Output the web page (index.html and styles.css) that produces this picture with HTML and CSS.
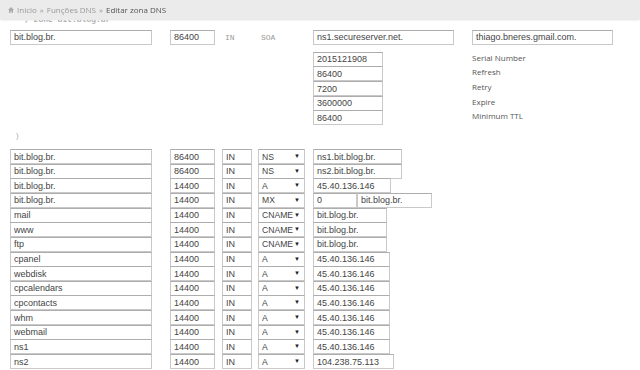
FILE: index.html
```html
<!DOCTYPE html>
<html lang="pt">
<head>
    <meta charset="UTF-8">
    <title>Editar zona DNS</title>
    <link rel="stylesheet" href="styles.css">
</head>
<body>
    <div class="topbar">
        <svg class="home" width="6" height="6" viewBox="0 0 6 6"><path d="M3 0 L6 3 L5 3 L5 6 L3.6 6 L3.6 4.2 L2.4 4.2 L2.4 6 L1 6 L1 3 L0 3 Z" fill="#aaa"/></svg>
        <span>Início</span> <span class="sep">»</span> <span>Funções DNS</span> <span class="sep">»</span> <span class="current">Editar zona DNS</span>
    </div>

    <div class="zone">
        <div class="comment"><span>; zone bit.blog.br</span></div>

        <div class="row soa">
            <input class="name" type="text" value="bit.blog.br.">
            <input class="ttl" type="text" value="86400">
            <span class="mono cls">IN</span>
            <span class="mono type-txt">SOA</span>
            <input class="soa-ns" type="text" value="ns1.secureserver.net.">
            <input class="soa-mail" type="text" value="thiago.bneres.gmail.com.">
        </div>

        <div class="serials">
            <div class="row serial"><input type="text" value="2015121908"><label>Serial Number</label></div>
            <div class="row serial"><input type="text" value="86400"><label>Refresh</label></div>
            <div class="row serial"><input type="text" value="7200"><label>Retry</label></div>
            <div class="row serial"><input type="text" value="3600000"><label>Expire</label></div>
            <div class="row serial"><input type="text" value="86400"><label>Minimum TTL</label></div>
        </div>

        <p class="close">)</p>

        <div id="records" class="records"></div>
    </div>

    <script>
        var records = [
            ['bit.blog.br.', '86400', 'NS', ['ns1.bit.blog.br.'], [89]],
            ['bit.blog.br.', '86400', 'NS', ['ns2.bit.blog.br.'], [89]],
            ['bit.blog.br.', '14400', 'A', ['45.40.136.146'], [78]],
            ['bit.blog.br.', '14400', 'MX', ['0', 'bit.blog.br.'], [44, 75]],
            ['mail', '14400', 'CNAME', ['bit.blog.br.'], [74]],
            ['www', '14400', 'CNAME', ['bit.blog.br.'], [74]],
            ['ftp', '14400', 'CNAME', ['bit.blog.br.'], [74]],
            ['cpanel', '14400', 'A', ['45.40.136.146'], [77]],
            ['webdisk', '14400', 'A', ['45.40.136.146'], [77]],
            ['cpcalendars', '14400', 'A', ['45.40.136.146'], [77]],
            ['cpcontacts', '14400', 'A', ['45.40.136.146'], [77]],
            ['whm', '14400', 'A', ['45.40.136.146'], [77]],
            ['webmail', '14400', 'A', ['45.40.136.146'], [77]],
            ['ns1', '14400', 'A', ['45.40.136.146'], [77]],
            ['ns2', '14400', 'A', ['104.238.75.113'], [81]]
        ];
        var types = ['A', 'AAAA', 'CNAME', 'MX', 'NS', 'TXT'];

        function input(cls, value) {
            var ele = document.createElement('input');
            ele.setAttribute('type', 'text');
            if (cls) ele.classList.add(cls);
            ele.value = value;
            return ele;
        }

        var container = document.getElementById('records');
        for (var i = 0; i < records.length; i++) {
            var r = records[i];
            var row = document.createElement('div');
            row.classList.add('row');
            row.appendChild(input('name', r[0]));
            row.appendChild(input('ttl', r[1]));
            row.appendChild(input('cls', 'IN'));

            var wrap = document.createElement('span');
            wrap.classList.add('type');
            var sel = document.createElement('select');
            for (var t = 0; t < types.length; t++) {
                var opt = document.createElement('option');
                opt.textContent = types[t];
                if (types[t] == r[2]) opt.selected = true;
                sel.appendChild(opt);
            }
            wrap.appendChild(sel);
            row.appendChild(wrap);

            for (var v = 0; v < r[3].length; v++) {
                var val = input(v == 0 ? 'value' : 'value-next', r[3][v]);
                val.style.width = r[4][v] + 'px';
                row.appendChild(val);
            }
            container.appendChild(row);
        }
    </script>
</body>
</html>
```

FILE: styles.css
```css
body{
    margin: 0;
    padding: 0;
    background: #fff;
    font-family: "Liberation Sans", Arial, sans-serif;
}
.topbar{
    position: fixed;
    top: 0;
    left: 0;
    right: 0;
    height: 19px;
    padding-left: 8px;
    display: flex;
    align-items: center;
    gap: 3px;
    background: #ebebeb;
    box-shadow: 0 1px 2px rgba(0,0,0,0.12);
    font-family: "Open Sans", sans-serif;
    font-size: 8px;
    line-height: 10px;
    color: #999;
    z-index: 2;
}
.topbar .current{
    color: #555;
}
.zone{
    padding-top: 20px;
}
/* only the lower edge of this line shows under the bar */
.comment{
    height: 4px;
    margin: 0 0 6px 24px;
    overflow: hidden;
    font-family: "Liberation Mono", monospace;
    font-size: 8px;
    line-height: 8px;
    color: #999;
}
.comment span{
    display: block;
    margin-top: -4px;
}
.row{
    display: flex;
    align-items: center;
    height: 14.65px;
}
input, select{
    box-sizing: border-box;
    height: 15px;
    margin: 0;
    padding: 0 0 0 3px;
    border: 1px solid #c9c9c9;
    border-top-color: #adadad;
    background: #fff;
    font-family: "Liberation Sans", Arial, sans-serif;
    font-size: 9px;
    color: #444;
    outline: none;
    flex-shrink: 0;
}
.name{
    margin-left: 10px;
    width: 142px;
}
.ttl{
    margin-left: 18px;
    width: 45px;
}
.cls{
    margin-left: 7px;
    width: 30px;
}
.mono{
    font-family: "Liberation Mono", monospace;
    font-size: 8px;
    color: #999;
}
.soa .cls{
    padding-left: 3px;
    box-sizing: border-box;
}
.type-txt{
    margin-left: 6px;
    width: 47px;
    padding-left: 3px;
    box-sizing: border-box;
}
.soa-ns{
    margin-left: 8px;
    width: 141px;
}
.soa-mail{
    margin-left: 18px;
    width: 141px;
}
.soa{
    height: 14px;
}
.serials{
    margin-top: 8px;
}
.serial input{
    margin-left: 313px;
    width: 70px;
}
.serial label{
    margin-left: 89px;
    margin-bottom: 4px;
    font-family: "Open Sans", sans-serif;
    font-size: 8px;
    color: #555;
}
.close{
    margin: 6px 0 0 16px;
    height: 18px;
    font-size: 8px;
    line-height: 10px;
    color: #aaa;
}
.type{
    position: relative;
    display: block;
    flex-shrink: 0;
    margin-left: 6px;
    width: 47px;
    height: 15px;
}
.type select{
    display: block;
    width: 47px;
    appearance: none;
    -webkit-appearance: none;
    padding-left: 3px;
    border-radius: 0;
    font-size: 8.6px;
}
.type::after{
    content: "▼";
    position: absolute;
    right: 5px;
    top: 4px;
    font-size: 6px;
    line-height: 6px;
    color: #222;
    pointer-events: none;
}
.value{
    margin-left: 8px;
}
```
